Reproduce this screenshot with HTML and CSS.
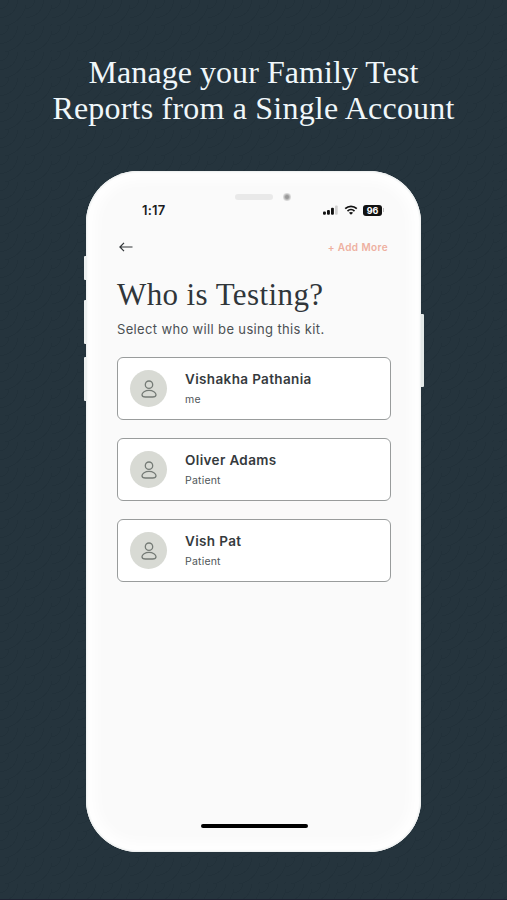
FILE: index.html
```html
<!DOCTYPE html>
<html lang="en">
<head>
<meta charset="utf-8">
<title>Who is Testing?</title>
<link rel="stylesheet" href="styles.css">
</head>
<body>
<svg class="defs" width="0" height="0" aria-hidden="true">
  <symbol id="person" viewBox="0 0 18 20">
    <circle cx="9" cy="5.7" r="3.7"/>
    <path d="M9 11.400c-3.800 0-7 2.100-7 4.400 0 1.700 1.500 2.200 3.500 2.200h7c2 0 3.500-.5 3.500-2.200 0-2.300-3.200-4.400-7-4.400z"/>
  </symbol>
</svg>
<main class="page">
  <h1 class="headline"><span class="line-one">Manage your Family Test</span><span class="line-two">Reports from a Single Account</span></h1>
  <section class="phone">
    <i class="key key-mute"></i><i class="key key-up"></i><i class="key key-down"></i><i class="key key-power"></i>
    <div class="notch"><i class="speaker"></i><i class="camera"></i></div>
    <div class="status">
      <span class="time">1:17</span>
      <div class="indicators">
        <svg width="15" height="10" viewBox="0 0 15 10"><rect x="0" y="6.6" width="2.9" height="3.2" rx="1"/><rect x="4" y="4.9" width="2.9" height="4.9" rx="1"/><rect x="8" y="2.7" width="2.9" height="7.1" rx="1"/><rect class="off" x="12" y=".5" width="2.7" height="9.3" rx="1"/></svg>
        <svg class="wifi" width="14" height="10" viewBox="0 0 14 10"><path d="M1.200 3.700C4.500.5 9.500.5 12.800 3.700M3.500 6.100c2-1.900 5-1.900 7 0"/><path class="dot" d="M7 9.800 4.900 7.800c1.200-1 3-1 4.200 0z"/></svg>
        <span class="battery">96</span><i class="tip"></i>
      </div>
    </div>
    <nav class="bar">
      <svg width="14" height="10" viewBox="0 0 14 10"><path d="M13.500 5H1M5 .8.9 5 5 9.200"/></svg>
      <a class="add">+ Add More</a>
    </nav>
    <h2 class="title">Who is Testing?</h2>
    <p class="hint">Select who will be using this kit.</p>
    <div class="list">
      <article class="card"><span class="avatar"><svg width="18" height="20"><use href="#person"/></svg></span><div><h3>Vishakha Pathania</h3><p>me</p></div></article>
      <article class="card"><span class="avatar"><svg width="18" height="20"><use href="#person"/></svg></span><div><h3>Oliver Adams</h3><p>Patient</p></div></article>
      <article class="card"><span class="avatar"><svg width="18" height="20"><use href="#person"/></svg></span><div><h3>Vish Pat</h3><p>Patient</p></div></article>
    </div>
    <i class="home"></i>
  </section>
</main>
</body>
</html>
```
FILE: styles.css
```css
* { box-sizing: border-box; margin: 0; padding: 0; }
body { background: #25343d; font-family: Inter, "Open Sans", sans-serif; color: #353a3d; }
.defs { position: absolute; }
.page {
  height: 900px;
  padding-top: 54px;
  border-bottom: 1px solid #1e2232;
  background:
    repeating-radial-gradient(circle at 0 0, transparent 0 8px, rgba(10, 25, 33, .12) 8px 9px) 0 0 / 26px 26px,
    #25343d;
}
.headline { font: 400 32px/36px "Liberation Serif", serif; color: #f0f7fa; text-align: center; height: 117px; }
.headline span { display: block; white-space: nowrap; }
.line-one { letter-spacing: .05px; }
.line-two { letter-spacing: .2px; }
.phone {
  position: relative;
  display: flex;
  flex-direction: column;
  width: 335px;
  height: 681px;
  margin-left: 86px;
  padding: 0 30px 0 31px;
  border-radius: 52px;
  background: #fafafa;
  box-shadow: inset 0 0 2px 1px #e9ecec, inset 0 0 14px 9px #fff;
}
.key { position: absolute; left: -2px; width: 3px; background: #eef1f1; border-radius: 1px 0 0 1px; }
.key-mute { top: 85px; height: 24px; }
.key-up { top: 129px; height: 44px; }
.key-down { top: 186px; height: 44px; }
.key-power { left: auto; right: -3px; top: 143px; height: 73px; border-radius: 0 1px 1px 0; background: #e4e9e8; }
.notch { display: flex; align-items: center; height: 12px; margin: 20px 0 0 118px; }
.speaker { width: 38px; height: 6px; border-radius: 3px; background: #e9e9e9; }
.camera { width: 8px; height: 8px; margin-left: 10px; border-radius: 50%; background: radial-gradient(circle, #999 25%, #dcdcdc 65%); }
.status { display: flex; align-items: center; justify-content: space-between; height: 14px; padding: 0 7px 0 25px; }
.time { font-size: 13px; font-weight: 600; line-height: 14px; letter-spacing: .2px; color: #1b1b1d; }
.indicators { display: flex; align-items: center; fill: #111; }
.off { fill: #d0d0d0; }
.wifi { margin: 0 5px 0 6px; fill: none; stroke: #111; stroke-width: 1.7; }
.wifi .dot { fill: #111; stroke: none; }
.battery { width: 19px; height: 11px; border-radius: 3px; background: #111; color: #fff; font-size: 9px; font-weight: 700; line-height: 11px; text-align: center; }
.tip { width: 1px; height: 4px; margin-left: 1px; background: #bbb; }
.bar { display: flex; align-items: center; justify-content: space-between; height: 16px; margin: 22px 3px 0 2px; }
.bar svg { fill: none; stroke: #303437; stroke-width: 1.2; }
.add { color: #eeb0a0; font-size: 10px; font-weight: 600; line-height: 16px; letter-spacing: .4px; }
.title { margin-top: 21px; font: 400 31px/38px "Liberation Serif", serif; letter-spacing: .4px; white-space: nowrap; color: #30363a; }
.hint { margin-top: 6px; font-size: 13px; line-height: 18px; letter-spacing: .35px; white-space: nowrap; color: #4b5053; }
.list { display: grid; gap: 18px; margin-top: 19px; }
.card { display: flex; align-items: center; height: 63px; padding-left: 12px; border: 1px solid #999c9c; border-radius: 6px; background: #fff; }
.avatar { display: grid; place-items: center; width: 37px; height: 37px; margin-right: 18px; border-radius: 50%; background: #d8dad4; }
.avatar svg { fill: none; stroke: #757b76; stroke-width: 1.3; }
.card h3 { font-size: 13.5px; font-weight: 600; line-height: 18px; letter-spacing: .36px; white-space: nowrap; }
.card p { margin-top: 4px; font-size: 10.5px; line-height: 16px; letter-spacing: .2px; color: #505558; }
.home { width: 107px; height: 4px; margin: auto 0 24px 84px; border-radius: 2px; background: #000; }
```
